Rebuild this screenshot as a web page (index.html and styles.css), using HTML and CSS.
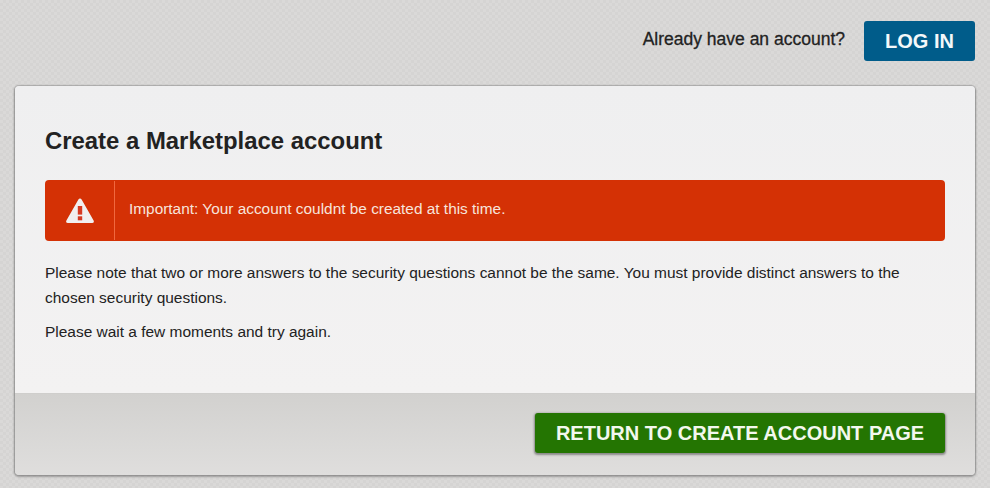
FILE: index.html
```html
<!DOCTYPE html>
<html lang="en">
<head>
<meta charset="utf-8">
<title>Create a Marketplace account</title>
<link rel="stylesheet" href="styles.css">
</head>
<body>
<header class="topbar">
  <span class="topbar-text">Already have an account?</span>
  <a class="login" href="#">LOG IN</a>
</header>
<main class="card">
  <section class="card-body">
    <h1 class="title">Create a Marketplace account</h1>
    <div class="alert">
      <div class="alert-icon">
        <svg width="30" height="27" viewBox="0 0 30 27" aria-hidden="true">
          <path d="M15 1.5 Q16 1.5 16.6 2.6 L28.6 23.6 Q29.6 26 27.2 26 L2.8 26 Q0.4 26 1.4 23.6 L13.4 2.6 Q14 1.5 15 1.5Z" fill="#f1f0f0"/>
          <rect x="12.8" y="9" width="4.4" height="8.6" fill="#d63a22"/>
          <rect x="12.8" y="19.3" width="4.4" height="4" fill="#d63a22"/>
        </svg>
      </div>
      <p class="alert-text">Important: Your account couldnt be created at this time.</p>
    </div>
    <p class="copy">Please note that two or more answers to the security questions cannot be the same. You must provide distinct answers to the chosen security questions.</p>
    <p class="copy">Please wait a few moments and try again.</p>
  </section>
  <footer class="card-foot">
    <a class="return" href="#">RETURN TO CREATE ACCOUNT PAGE</a>
  </footer>
</main>
</body>
</html>
```
FILE: styles.css
```css
* { box-sizing: border-box; }
html, body { height: 100%; }
body {
  margin: 0;
  padding: 0 15px;
  overflow: hidden;
  font-family: "Liberation Sans", Arial, sans-serif;
  color: #222;
  background-color: #dad9d8;
  background-image:
    linear-gradient(45deg, #d5d4d3 25%, transparent 25%, transparent 75%, #d5d4d3 75%),
    linear-gradient(45deg, #d5d4d3 25%, transparent 25%, transparent 75%, #d5d4d3 75%);
  background-size: 6px 6px;
  background-position: 0 0, 3px 3px;
}
.topbar {
  height: 86px;
  padding-top: 21px;
  display: flex;
  justify-content: flex-end;
  align-items: flex-start;
}
.topbar-text {
  margin-top: 9px;
  margin-right: 19px;
  font-size: 17.5px;
  line-height: 18px;
  color: #222;
  -webkit-text-stroke: 0.3px #222;
}
.login {
  width: 111px;
  height: 40px;
  border-radius: 3px;
  background: #005c8a;
  color: #f4f8fa;
  font-size: 20px;
  font-weight: bold;
  line-height: 40px;
  text-align: center;
  text-decoration: none;
}
.card {
  height: 389px;
  border-radius: 4px;
  overflow: hidden;
  box-shadow: 0 0 1px 1px rgba(130, 130, 130, 0.4), 0 1px 2px 1px rgba(90, 90, 90, 0.45);
  display: flex;
  flex-direction: column;
}
.card-body {
  height: 308px;
  padding: 41px 30px 0;
  background: linear-gradient(180deg, #efeff0 0%, #f3f2f2 100%);
  border-bottom: 1px solid #cfcecc;
}
.title {
  margin: 0 0 25px;
  font-size: 23.9px;
  line-height: 28px;
  font-weight: bold;
  color: #222;
}
.alert {
  height: 61px;
  display: flex;
  align-items: stretch;
  border-radius: 4px;
  background: #d43105;
  padding: 1px 0;
}
.alert-icon {
  width: 70px;
  border-right: 1px solid #f0683f;
  display: flex;
  align-items: center;
  justify-content: center;
}
.alert-text {
  margin: 0;
  padding-left: 14px;
  color: #f7e4dc;
  font-size: 15.4px;
  line-height: 55px;
}
.copy {
  margin: 0 0 9px;
  font-size: 15.46px;
  line-height: 25px;
  color: #222;
}
.alert + .copy { margin-top: 19px; }
.card-foot {
  flex: 1;
  padding: 19px 30px 0 0;
  display: flex;
  justify-content: flex-end;
  align-items: flex-start;
  background: linear-gradient(180deg, #d2d1cf 0%, #dfdedd 100%);
}
.return {
  width: 410px;
  height: 40px;
  border-radius: 3px;
  background: #247502;
  box-shadow: 0 1px 2px 1px rgba(40, 40, 40, 0.45);
  color: #f3f8ee;
  font-size: 20px;
  font-weight: bold;
  line-height: 40px;
  text-align: center;
  text-decoration: none;
}
```
